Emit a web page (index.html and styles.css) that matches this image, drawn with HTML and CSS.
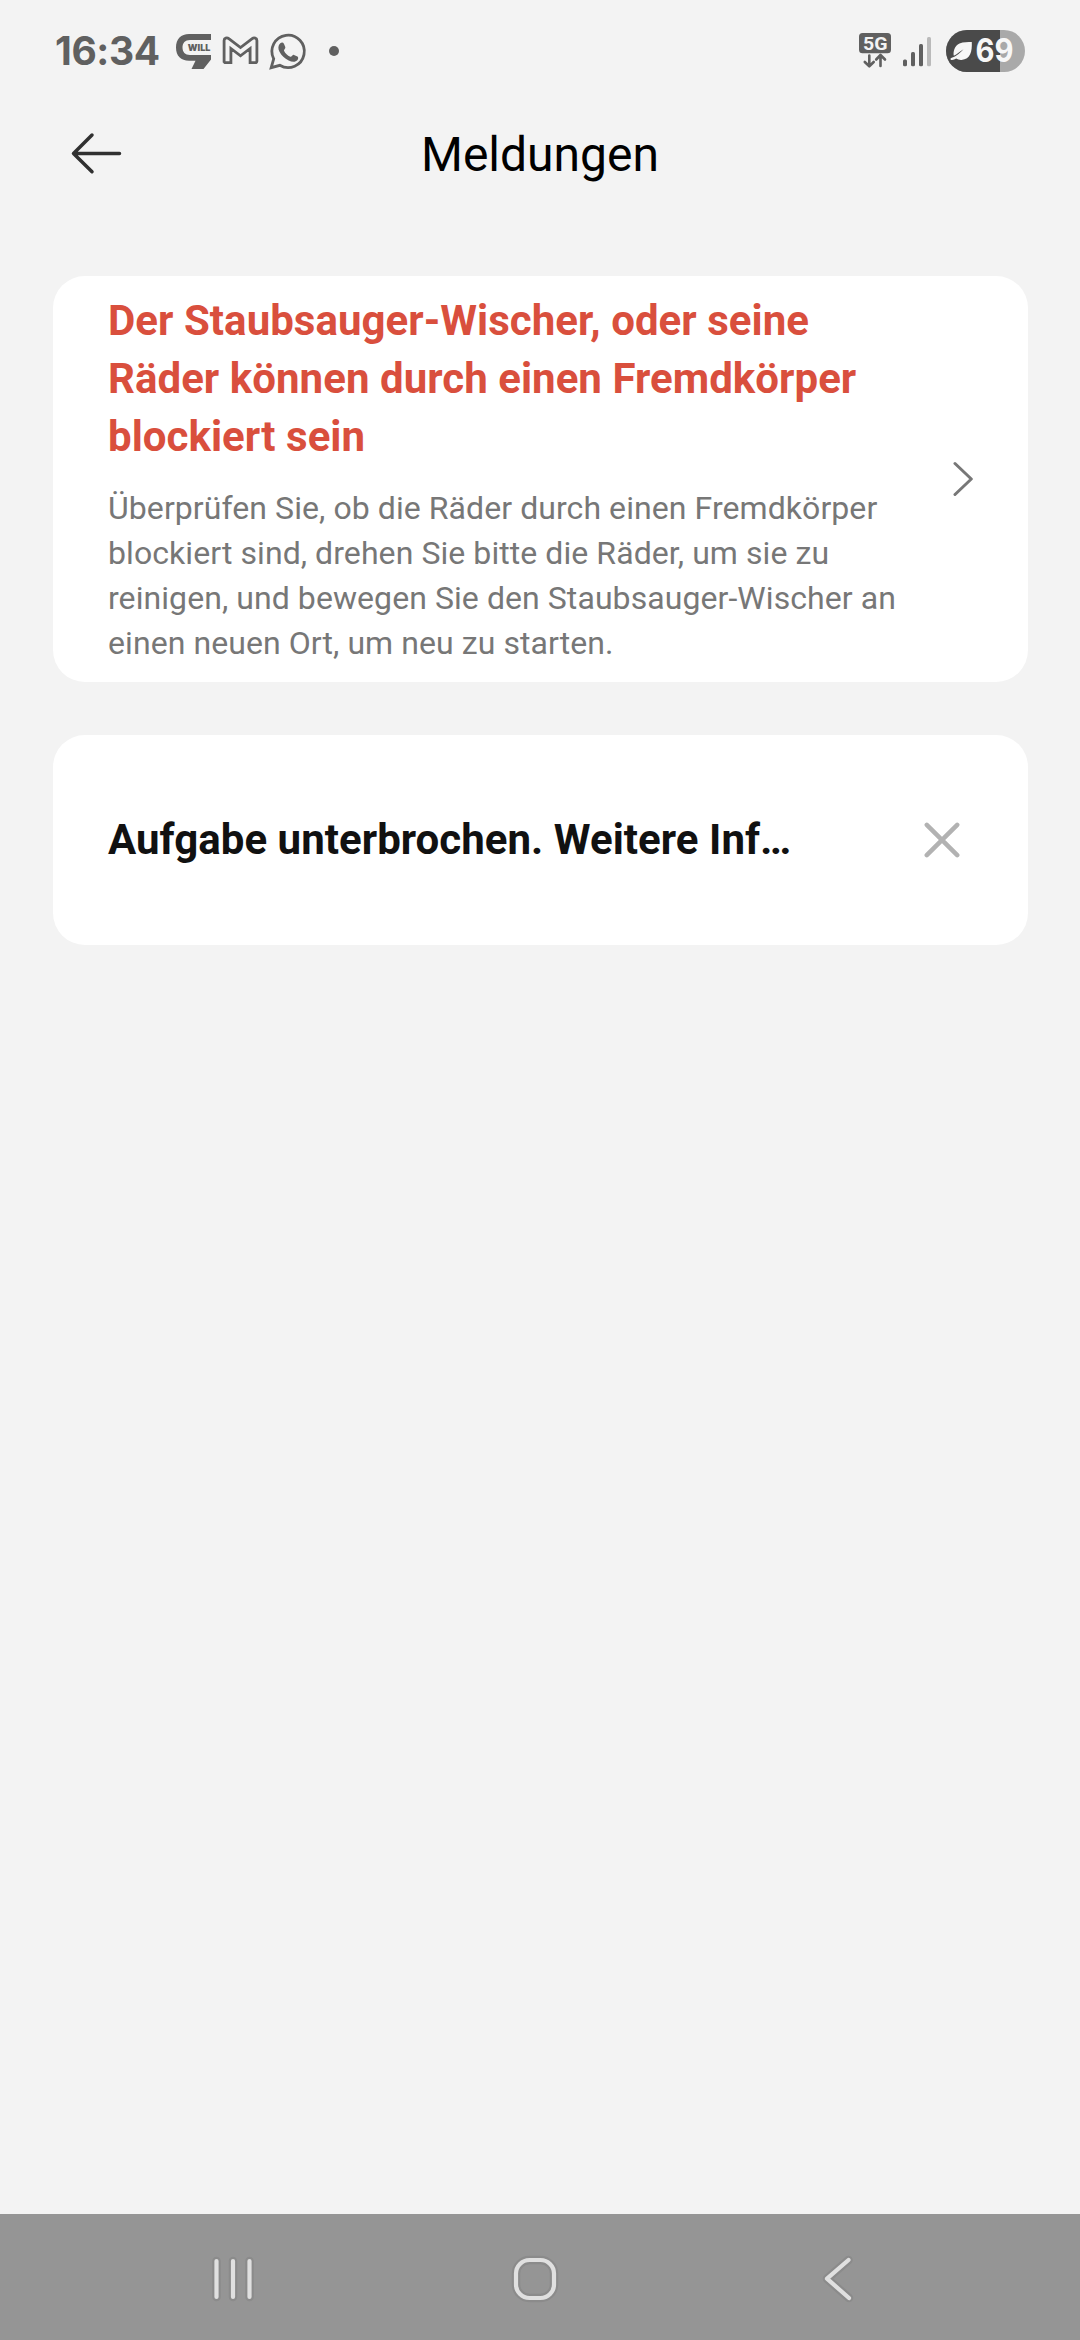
FILE: index.html
```html
<!DOCTYPE html>
<html lang="de">
<head>
<meta charset="utf-8">
<title>Meldungen</title>
<link rel="stylesheet" href="styles.css">
</head>
<body>
<div class="screen">
  <div class="status">
    <span class="clock">16:34</span>
    <svg class="status-apps" width="170" height="44" viewBox="172 29 170 44">
      <path class="ink" d="M211 34H189C181 34 176 39 176 47.500S181 60.700 189 60.700H195.500L191.500 69H203.500L211 59.500V55H190C185 55 182.500 52 182.500 47.500S185 40 190 40H211Z"/>
      <text class="will" x="187.800" y="51" textLength="22.500" lengthAdjust="spacingAndGlyphs">WILL</text>
      <path class="line" stroke-width="2.800" d="M224.100 62.600V40.500C224.100 38 227 37.300 228.800 38.700L240.500 47.600L252.200 38.700C254 37.300 256.900 38 256.900 40.500V60.900Q256.900 62.600 255.200 62.600H250.100V48.500L240.500 55.800L230.900 48.500V62.600H225.800Q224.100 62.600 224.100 60.900Z"/>
      <path class="line" stroke-width="2.800" d="M271.200 67.700L273.700 58.800A16.200 16.200 0 1 1 279.800 65.300Z"/>
      <path class="ink" d="M280.300 43.300C281.500 42.100 283.200 42.200 283.900 43.700L285.300 47C285.900 48.500 283.600 49.700 284 50.800C285.300 53.600 287.500 55.600 290.300 56.800C291.600 57.300 292.700 54.400 294 54.900L297.400 56.500C298.500 57 298.400 58.800 297.500 59.900C295.500 62.300 292 62 288.700 60.400C284.500 58.400 281.500 55.500 279.500 51.800C277.900 48.600 277.900 45.600 280.300 43.300Z"/>
      <circle class="ink" cx="334" cy="51" r="5"/>
    </svg>
    <svg class="status-system" width="170" height="48" viewBox="857 26 170 48">
      <rect class="ink" x="859" y="32" width="32" height="20.300" rx="3.500"/>
      <text class="net" x="863" y="48.700" textLength="24.500" lengthAdjust="spacingAndGlyphs">5G</text>
      <path class="line" stroke-width="2.600" stroke-linecap="round" stroke-linejoin="round" d="M869.300 54.500V65M864.800 61L869.300 65.300L873.700 61M880.500 65V54.500M876.200 58.500L880.500 54L885 58.500"/>
      <g class="ink">
        <rect x="903" y="58.500" width="4" height="6.700" rx="1.500"/>
        <rect x="911" y="51" width="4" height="14.200" rx="1.500"/>
        <rect x="919" y="43" width="4" height="22.200" rx="1.500"/>
      </g>
      <rect class="faint" x="927" y="36" width="4" height="29.200" rx="1.500"/>
      <rect class="level-rest" x="946" y="29" width="79" height="42" rx="21"/>
      <path class="level" d="M1000 29H967A21 21 0 0 0 967 71H1000Z"/>
      <path class="leaf" d="M971.800 41C972.200 50.500 970.500 58.300 961.500 58.900C959.500 59 957.600 58.500 956.200 57.600C954.700 58.700 953 59.100 951.200 58.900C950.100 58.700 950.200 57.400 951.200 57C956.400 55.600 960.500 51.600 963.500 48.300C959.900 50.500 957 53.500 953.800 54.800C953 50.500 954.500 45 959.500 42.500C963.500 40.600 968 41.300 971.800 41Z"/>
      <text class="percent" x="975.500" y="61" textLength="38" lengthAdjust="spacingAndGlyphs">69</text>
    </svg>
  </div>

  <header class="topbar">
    <svg class="back" width="54" height="46" viewBox="69 130 54 46">
      <path d="M119.500 153.500H73.500M92 135L73.500 153.500L92 171.700"/>
    </svg>
    <h1>Meldungen</h1>
  </header>

  <main class="list">
    <section class="card alert">
      <div class="copy">
        <h2>Der Staubsauger-Wischer, oder seine<br>Räder können durch einen Fremdkörper<br>blockiert sein</h2>
        <p>Überprüfen Sie, ob die Räder durch einen Fremdkörper<br>blockiert sind, drehen Sie bitte die Räder, um sie zu<br>reinigen, und bewegen Sie den Staubsauger-Wischer an<br>einen neuen Ort, um neu zu starten.</p>
      </div>
      <svg class="chevron" width="20" height="36" viewBox="953 461 20 36"><path d="M955 463.500L971.300 479L955 494.500"/></svg>
    </section>
    <section class="card notice">
      <h2>Aufgabe unterbrochen. Weitere Inf…</h2>
      <svg class="close" width="36" height="36" viewBox="0 0 36 36"><path d="M2.800 2.800L33.200 33.200M33.200 2.800L2.800 33.200"/></svg>
    </section>
  </main>

  <nav class="navbar">
    <svg width="50" height="54" viewBox="208 2252 50 54">
      <path class="halo" d="M216.500 2261V2297M233 2261V2297M249.500 2261V2297"/>
      <path class="glyph" d="M216.500 2261V2297M233 2261V2297M249.500 2261V2297"/>
    </svg>
    <svg class="home" width="54" height="54" viewBox="508 2252 54 54">
      <rect class="halo" x="516" y="2260" width="38" height="38" rx="13.500"/>
      <rect class="glyph" x="516" y="2260" width="38" height="38" rx="13.500"/>
    </svg>
    <svg width="40" height="54" viewBox="818 2252 40 54">
      <path class="halo" d="M848.500 2260L827 2278.700L849 2298"/>
      <path class="glyph" d="M848.500 2260L827 2278.700L849 2298"/>
    </svg>
  </nav>
</div>
</body>
</html>
```
FILE: styles.css
```css
* {
  box-sizing: border-box;
  margin: 0;
}

body {
  background: #f3f3f3;
  font-family: Roboto, "Noto Sans", sans-serif;
}

svg {
  display: block;
  flex: none;
}

.screen {
  display: flex;
  flex-direction: column;
  width: 1080px;
  height: 2340px;
  overflow: hidden;
}

.status {
  display: flex;
  align-items: center;
  height: 102px;
  padding: 0 53px 0 55px;
}

.clock {
  width: 117px;
  color: #606060;
  font: 700 39px/48px Inter, sans-serif;
  letter-spacing: -0.4px;
  white-space: nowrap;
}

.status-system {
  margin-left: auto;
}

.ink {
  fill: #606060;
}

.line {
  fill: none;
  stroke: #606060;
}

.faint {
  fill: #bababa;
}

.will {
  fill: #606060;
  font: 900 9.300px Inter, sans-serif;
}

.net {
  fill: #f3f3f3;
  font: 700 18px Roboto, sans-serif;
}

.level {
  fill: #4a4a4a;
}

.level-rest {
  fill: #a9a9a9;
}

.leaf {
  fill: #f7f7f7;
}

.percent {
  fill: #f7f7f7;
  font: 700 32px Inter, sans-serif;
}

.topbar {
  display: grid;
  grid-template-columns: 54px 1fr 54px;
  align-items: center;
  height: 102px;
  padding: 0 69px;
}

.back {
  fill: none;
  stroke: #303030;
  stroke-width: 3.500px;
  stroke-linecap: round;
  stroke-linejoin: round;
}

h1 {
  padding-top: 4px;
  color: #000;
  font-size: 48px;
  font-weight: 400;
  line-height: 58px;
  text-align: center;
}

.list {
  display: flex;
  flex: 1;
  flex-direction: column;
  gap: 53px;
  padding: 72px 52px 0 53px;
}

.card {
  display: flex;
  align-items: center;
  justify-content: space-between;
  padding-left: 55px;
  border-radius: 32px;
  background: #fff;
}

.card h2 {
  color: #111;
  font-size: 42px;
  font-weight: 700;
  line-height: 58px;
  letter-spacing: 0.04px;
  white-space: nowrap;
}

.alert {
  height: 406px;
  padding-right: 55px;
}

.copy {
  padding-bottom: 1px;
}

.alert h2 {
  color: #d94f3d;
}

.alert p {
  margin-top: 20px;
  color: #777;
  font-size: 32px;
  line-height: 45px;
  letter-spacing: 0.07px;
  white-space: nowrap;
}

.chevron {
  fill: none;
  stroke: #777;
  stroke-width: 3px;
  stroke-linecap: round;
  stroke-linejoin: round;
}

.notice {
  height: 210px;
  padding-right: 68px;
}

.close {
  fill: none;
  stroke: #b2b2b2;
  stroke-width: 4.500px;
  stroke-linecap: round;
}

.navbar {
  display: flex;
  align-items: center;
  justify-content: space-between;
  height: 126px;
  padding: 4px 222px 0 208px;
  background: #959595;
}

.home {
  margin-right: 6px;
}

.halo,
.glyph {
  fill: none;
  stroke-linecap: round;
  stroke-linejoin: round;
}

.halo {
  stroke: #8b8b8b;
  stroke-width: 8.500px;
}

.glyph {
  stroke: #e0e0e0;
  stroke-width: 4.200px;
}
```
